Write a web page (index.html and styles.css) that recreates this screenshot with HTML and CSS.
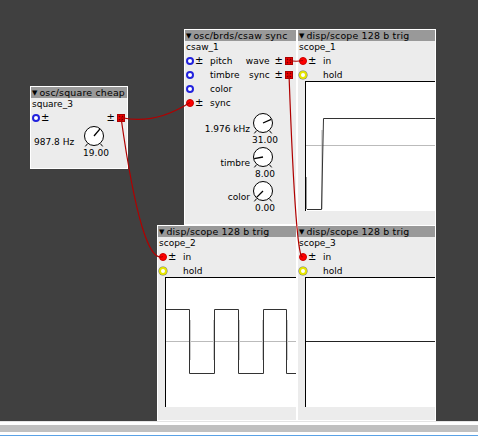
FILE: index.html
```html
<!DOCTYPE html>
<html lang="en">
<head>
<meta charset="utf-8">
<title>Patch</title>
<link rel="stylesheet" href="styles.css">
</head>
<body>
<div class="canvas">

  <div class="obj obj-square">
    <div class="title"><span class="tri">▼</span>osc/square cheap</div>
    <div class="name">square_3</div>
    <div class="row">
      <span class="port in-blue"></span><span class="pm">±</span>
      <span class="fill"></span>
      <span class="pm-out">±</span><span class="out"></span>
    </div>
    <div class="krow krow-spread">
      <span class="klabel">987.8 Hz</span>
      <div class="kgroup">
        <svg class="knob" viewBox="0 0 24 24" width="24" height="24">
          <circle cx="12" cy="11" r="9.5" fill="#fff" stroke="#000"/>
          <line x1="5.6" y1="18.7" x2="3.3" y2="21.4" stroke="#000"/>
          <line x1="18.4" y1="18.7" x2="20.7" y2="21.4" stroke="#000"/>
          <line x1="12" y1="11" x2="17.8" y2="4.1" stroke="#000" stroke-width="1.3"/>
        </svg>
        <span class="kval">19.00</span>
      </div>
    </div>
  </div>

  <div class="obj obj-csaw">
    <div class="title"><span class="tri">▼</span>osc/brds/csaw sync</div>
    <div class="name">csaw_1</div>
    <div class="row row-r">
      <span class="port in-blue"></span><span class="pm">±</span><span class="lbl">pitch</span>
      <span class="fill"></span>
      <span class="olbl">wave</span><span class="pm-out">±</span><span class="out"></span>
    </div>
    <div class="row row-r">
      <span class="port in-blue"></span><span class="pm pm-none">±</span><span class="lbl">timbre</span>
      <span class="fill"></span>
      <span class="olbl">sync</span><span class="pm-out">±</span><span class="out"></span>
    </div>
    <div class="row">
      <span class="port in-blue"></span><span class="pm pm-none">±</span><span class="lbl">color</span>
    </div>
    <div class="row">
      <span class="port in-red"></span><span class="pm">±</span><span class="lbl">sync</span>
    </div>
    <div class="knobs">
      <div class="krow">
        <span class="klabel">1.976 kHz</span>
        <div class="kgroup">
          <svg class="knob" viewBox="0 0 24 24" width="24" height="24">
            <circle cx="12" cy="11" r="9.5" fill="#fff" stroke="#000"/>
            <line x1="5.6" y1="18.7" x2="3.3" y2="21.4" stroke="#000"/>
            <line x1="18.4" y1="18.7" x2="20.7" y2="21.4" stroke="#000"/>
            <line x1="12" y1="11" x2="20.2" y2="7.3" stroke="#000" stroke-width="1.3"/>
          </svg>
          <span class="kval">31.00</span>
        </div>
      </div>
      <div class="krow">
        <span class="klabel">timbre</span>
        <div class="kgroup">
          <svg class="knob" viewBox="0 0 24 24" width="24" height="24">
            <circle cx="12" cy="11" r="9.5" fill="#fff" stroke="#000"/>
            <line x1="5.6" y1="18.7" x2="3.3" y2="21.4" stroke="#000"/>
            <line x1="18.4" y1="18.7" x2="20.7" y2="21.4" stroke="#000"/>
            <line x1="12" y1="11" x2="3.2" y2="12.7" stroke="#000" stroke-width="1.3"/>
          </svg>
          <span class="kval">8.00</span>
        </div>
      </div>
      <div class="krow">
        <span class="klabel">color</span>
        <div class="kgroup">
          <svg class="knob" viewBox="0 0 24 24" width="24" height="24">
            <circle cx="12" cy="11" r="9.5" fill="#fff" stroke="#000"/>
            <line x1="5.6" y1="18.7" x2="3.3" y2="21.4" stroke="#000"/>
            <line x1="18.4" y1="18.7" x2="20.7" y2="21.4" stroke="#000"/>
            <line x1="12" y1="11" x2="5.6" y2="17.4" stroke="#000" stroke-width="1.3"/>
          </svg>
          <span class="kval">0.00</span>
        </div>
      </div>
    </div>
  </div>

  <div class="obj obj-scope1">
    <div class="title"><span class="tri">▼</span>disp/scope 128 b trig</div>
    <div class="name">scope_1</div>
    <div class="row">
      <span class="port in-red"></span><span class="pm">±</span><span class="lbl">in</span>
    </div>
    <div class="row row-hold">
      <span class="port in-yellow"></span><span class="pm pm-none">±</span><span class="lbl">hold</span>
    </div>
    <div class="plot">
      <svg width="140" height="129" viewBox="0 0 140 129">
        <line x1="0" y1="63.5" x2="140" y2="63.5" stroke="#bbb"/>
        <line x1="0.5" y1="95" x2="0.5" y2="127" stroke="#999"/>
        <line x1="16" y1="48" x2="16" y2="127" stroke="#aaa"/>
        <polyline points="1,127.5 15.5,127.5 17.5,36.5 140,36.5" fill="none" stroke="#333"/>
      </svg>
    </div>
  </div>

  <div class="obj obj-scope2">
    <div class="title"><span class="tri">▼</span>disp/scope 128 b trig</div>
    <div class="name">scope_2</div>
    <div class="row">
      <span class="port in-red"></span><span class="pm">±</span><span class="lbl">in</span>
    </div>
    <div class="row row-hold">
      <span class="port in-yellow"></span><span class="pm pm-none">±</span><span class="lbl">hold</span>
    </div>
    <div class="plot">
      <svg width="140" height="129" viewBox="0 0 140 129">
        <line x1="0" y1="63.5" x2="140" y2="63.5" stroke="#bbb"/>
        <g stroke="#ccc">
          <line x1="24.5" y1="42" x2="24.5" y2="82"/>
          <line x1="47.5" y1="42" x2="47.5" y2="82"/>
          <line x1="73.5" y1="42" x2="73.5" y2="82"/>
          <line x1="96.5" y1="42" x2="96.5" y2="82"/>
          <line x1="121.5" y1="42" x2="121.5" y2="82"/>
        </g>
        <path d="M0,31.5 H23.5 V95.5 H48.5 V31.5 H72.5 V95.5 H97.5 V31.5 H120.5 V95.5 H140" fill="none" stroke="#333"/>
      </svg>
    </div>
  </div>

  <div class="obj obj-scope3">
    <div class="title"><span class="tri">▼</span>disp/scope 128 b trig</div>
    <div class="name">scope_3</div>
    <div class="row">
      <span class="port in-red"></span><span class="pm">±</span><span class="lbl">in</span>
    </div>
    <div class="row row-hold">
      <span class="port in-yellow"></span><span class="pm pm-none">±</span><span class="lbl">hold</span>
    </div>
    <div class="plot">
      <svg width="140" height="129" viewBox="0 0 140 129">
        <line x1="0" y1="63.5" x2="140" y2="63.5" stroke="#222"/>
      </svg>
    </div>
  </div>

  <svg class="wires" width="478" height="421" viewBox="0 0 478 421">
    <g fill="none" stroke="#b00000" stroke-width="1.2">
      <path d="M121,117.5 Q155,125 190,102.5"/>
      <path d="M121,117.5 Q142,266 163,256.5"/>
      <path d="M289,60.5 Q296,62 303,60.5"/>
      <path d="M289,74.5 Q296,266 303,256.5"/>
    </g>
  </svg>
</div>
<div class="bottom">
  <div class="b-line"></div>
  <div class="b-white"></div>
  <div class="b-bar"></div>
  <div class="b-white"></div>
  <div class="b-blue"></div>
</div>
</body>
</html>
```

FILE: styles.css
```css
html, body {
  margin: 0;
  padding: 0;
}
body {
  width: 478px;
  height: 437px;
  overflow: hidden;
  background: #fff;
  font-family: "DejaVu Sans", "Liberation Sans", sans-serif;
}
.canvas {
  position: relative;
  height: 421px;
  background: #404040;
  overflow: hidden;
}
.obj {
  position: absolute;
  box-sizing: border-box;
  border: 1px solid #fff;
  background: #ececec;
  overflow: hidden;
  font-size: 9px;
  color: #000;
  white-space: nowrap;
}
.obj-square { left: 30px; top: 86px; width: 98px; height: 83px; }
.obj-csaw { left: 184px; top: 29px; width: 113px; height: 196px; }
.obj-scope1 { left: 297px; top: 29px; width: 139px; height: 197px; }
.obj-scope2 { left: 157px; top: 225px; width: 140px; height: 196px; }
.obj-scope3 { left: 297px; top: 225px; width: 139px; height: 196px; }

.title {
  height: 11px;
  line-height: 11px;
  background: #999;
  font-size: 9.4px;
  letter-spacing: 0.2px;
  padding-left: 1px;
}
.tri {
  font-size: 7px;
  letter-spacing: 0;
  vertical-align: 1px;
  margin-right: 2px;
}
.name {
  height: 13px;
  line-height: 13px;
  padding-left: 1px;
}
.row {
  height: 14px;
  display: flex;
  align-items: center;
  padding: 0 2px 0 1px;
}
.row-r { padding-right: 3px; }
.row-hold { height: 13px; }
.fill { flex: 1; }

.port {
  flex: none;
  width: 8px;
  height: 8px;
  box-sizing: border-box;
  border-radius: 50%;
}
.in-blue { border: 2px solid #2222dd; background: #fff; }
.in-red { background: #f00; border: 1px solid #c00; }
.in-yellow { border: 2px solid #e6e600; background: #fff; box-shadow: 0 0 0 0.6px #777; }
.out {
  flex: none;
  width: 8px;
  height: 8px;
  box-sizing: border-box;
  border: 1px solid #a00;
  background: radial-gradient(circle, #700 0.7px, transparent 1.1px) 0 0 / 3px 3px, #e00;
}
.pm {
  width: 9px;
  margin-left: 1px;
  font-size: 10px;
  line-height: 10px;
}
.pm-none { visibility: hidden; }
.pm-out {
  font-size: 10px;
  line-height: 10px;
  margin-right: 2px;
}
.lbl { margin-left: 6px; }
.olbl { margin-right: 5px; }

.knobs {
  margin-top: 2px;
  display: flex;
  flex-direction: column;
  gap: 1px;
}
.krow {
  display: flex;
  justify-content: flex-end;
  align-items: flex-start;
  padding-right: 16px;
}
.krow-spread {
  justify-content: space-between;
  padding-left: 3px;
}
.klabel {
  margin-top: 12px;
  line-height: 10px;
}
.kgroup {
  width: 30px;
  display: flex;
  flex-direction: column;
  align-items: center;
}
.knob {
  display: block;
  margin-right: 4px;
}
.kval {
  margin-top: -1px;
  line-height: 10px;
}

.plot {
  margin-left: 7px;
  border-top: 1px solid #000;
  border-left: 1px solid #000;
  background: #fff;
  height: 129px;
  width: 140px;
}
.plot svg { display: block; }

.wires {
  position: absolute;
  left: 0;
  top: 0;
  pointer-events: none;
}

.bottom { height: 16px; }
.b-line { height: 1px; background: #e4e4e4; }
.b-white { height: 3px; background: #fff; }
.b-bar { height: 7px; background: #c0c0c0; }
.b-blue { height: 1px; background: #5aa2e6; }
```
